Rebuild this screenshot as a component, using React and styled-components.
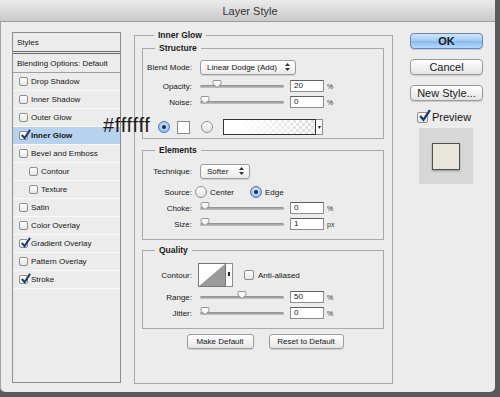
import React from "react";
import styled, { createGlobalStyle } from "styled-components";

const GlobalStyle = createGlobalStyle`
  html, body {
    margin: 0;
    padding: 0;
    background: #5a5a5a;
  }
  body {
    font-family: "Liberation Sans", Arial, sans-serif;
    color: #151515;
  }
`;

const styleItems = [
  { name: "Drop Shadow" },
  { name: "Inner Shadow" },
  { name: "Outer Glow" },
  { name: "Inner Glow", checked: true, active: true },
  { name: "Bevel and Emboss" },
  { name: "Contour", indent: true },
  { name: "Texture", indent: true },
  { name: "Satin" },
  { name: "Color Overlay" },
  { name: "Gradient Overlay", checked: true },
  { name: "Pattern Overlay" },
  { name: "Stroke", checked: true },
];

function Check({ checked, size }) {
  return (
    <CheckBox $size={size}>
      {checked && (
        <CheckMark viewBox="0 0 12 12" $size={size}>
          <path d="M2 6.5 L5 10 L11 1" fill="none" stroke="#1c3b73" strokeWidth="2.2" />
        </CheckMark>
      )}
    </CheckBox>
  );
}

function Slider({ value }) {
  return (
    <SliderWrap>
      <Track />
      <Thumb viewBox="0 0 10 8" $pos={value}>
        <path d="M1 1.5 Q1 0.5 2 0.5 H8 Q9 0.5 9 1.5 V4 L5 7.5 L1 4 Z" fill="#fbfbfb" stroke="#7d7d7d" strokeWidth="0.8" />
      </Thumb>
    </SliderWrap>
  );
}

function SliderRow({ label, value, pos, unit, mt }) {
  return (
    <Row $mt={mt}>
      <Label>{label}</Label>
      <Slider value={pos} />
      <Input>{value}</Input>
      <Unit>{unit}</Unit>
    </Row>
  );
}

function Arrows() {
  return (
    <svg width="5" height="8" viewBox="0 0 5 8">
      <path d="M2.5 0 L5 3 H0 Z M2.5 8 L5 5 H0 Z" fill="#333" />
    </svg>
  );
}

export default function App() {
  return (
    <>
      <GlobalStyle />
      <Window>
        <TitleBar>Layer Style</TitleBar>
        <Body>
          <StylesPanel>
            <PanelHead>Styles</PanelHead>
            <PanelSub>Blending Options: Default</PanelSub>
            {styleItems.map((item) => (
              <StyleRow key={item.name} $active={item.active} $indent={item.indent}>
                <Check checked={item.checked} size={9} />
                <span>{item.name}</span>
              </StyleRow>
            ))}
          </StylesPanel>

          <Outer>
            <Legend>Inner Glow</Legend>

            <Group $mt={3} $pb={3}>
              <Legend>Structure</Legend>
              <Row $mt={6}>
                <Label>Blend Mode:</Label>
                <Select $w={96}>
                  <span>Linear Dodge (Add)</span>
                  <Arrows />
                </Select>
              </Row>
              <SliderRow label="Opacity:" value="20" pos={20} unit="%" mt={3} />
              <SliderRow label="Noise:" value="0" pos={0} unit="%" />
              <Row $mt={9} $pl={15}>
                <Radio $on />
                <Swatch />
                <Radio $ml={11} />
                <GradientBar />
                <PickerArrow $h={16}>
                  <svg width="3" height="3" viewBox="0 0 3 3">
                    <path d="M0 0 H3 L1.5 3 Z" fill="#222" />
                  </svg>
                </PickerArrow>
              </Row>
            </Group>

            <Group $mt={6} $pb={7}>
              <Legend>Elements</Legend>
              <Row $mt={8}>
                <Label>Technique:</Label>
                <Select $w={50}>
                  <span>Softer</span>
                  <Arrows />
                </Select>
              </Row>
              <Row $mt={5}>
                <Label $gap={3}>Source:</Label>
                <Radio />
                <RadioText $mr={16}>Center</RadioText>
                <Radio $on />
                <RadioText>Edge</RadioText>
              </Row>
              <SliderRow label="Choke:" value="0" pos={0} unit="%" />
              <SliderRow label="Size:" value="1" pos={0} unit="px" />
            </Group>

            <Group $mt={5} $pb={7}>
              <Legend>Quality</Legend>
              <Row $mt={8} $h={24}>
                <Label $gap={6}>Contour:</Label>
                <ContourBox>
                  <svg width="26" height="22" viewBox="0 0 26 22">
                    <path d="M0 22 L26 0 V22 Z" fill="#9b9b9b" />
                  </svg>
                </ContourBox>
                <PickerArrow $h={24}>
                  <svg width="2" height="6" viewBox="0 0 2 6">
                    <rect x="0" y="0" width="2" height="4" fill="#222" />
                  </svg>
                </PickerArrow>
                <Spacer $w={11} />
                <Check size={10} />
                <RadioText $ml={4}>Anti-aliased</RadioText>
              </Row>
              <SliderRow label="Range:" value="50" pos={50} unit="%" mt={2} />
              <SliderRow label="Jitter:" value="0" pos={0} unit="%" />
            </Group>

            <ButtonRow>
              <SmallButton $w={67}>Make Default</SmallButton>
              <SmallButton $w={75}>Reset to Default</SmallButton>
            </ButtonRow>
          </Outer>

          <Side>
            <DialogButton $primary>OK</DialogButton>
            <DialogButton>Cancel</DialogButton>
            <DialogButton>New Style...</DialogButton>
            <PreviewRow>
              <Check checked size={11} />
              <span>Preview</span>
            </PreviewRow>
            <PreviewBox>
              <PreviewSwatch />
            </PreviewBox>
          </Side>
        </Body>

        <Annotation>#ffffff</Annotation>
      </Window>
    </>
  );
}

const Window = styled.div`
  position: relative;
  width: 495px;
  height: 392px;
  background: #ececec;
  border-radius: 0 0 5px 5px;
  box-shadow: inset 1px 0 0 #a3a3a3;
  overflow: hidden;
`;

const TitleBar = styled.div`
  height: 22px;
  box-sizing: border-box;
  border-bottom: 1px solid #9d9d9d;
  background: linear-gradient(#ececec, #c9c9c9);
  display: flex;
  align-items: center;
  justify-content: center;
  padding: 1px 0 0 5px;
  font-size: 11px;
  color: #333;
`;

const Body = styled.div`
  display: flex;
  align-items: flex-start;
  padding: 8px 0 0 12px;
`;

const StylesPanel = styled.div`
  width: 109px;
  height: 351px;
  margin-top: 2px;
  box-sizing: border-box;
  border: 1px solid #8c8c8c;
  background: #ececec;
  font-size: 8px;
  flex-shrink: 0;
`;

const PanelHead = styled.div`
  height: 18px;
  display: flex;
  align-items: center;
  padding-left: 4px;
  border-bottom: 3px double #6c6c6c;
`;

const PanelSub = styled.div`
  height: 18px;
  display: flex;
  align-items: center;
  padding-left: 4px;
  border-bottom: 1px solid #a0a0a0;
`;

const StyleRow = styled.div`
  height: 17px;
  display: flex;
  align-items: center;
  gap: 3px;
  padding-left: ${(p) => (p.$indent ? 16 : 6)}px;
  border-bottom: 1px solid #f9f9f9;
  background: ${(p) => (p.$active ? "#b7d2ef" : "transparent")};
  font-weight: ${(p) => (p.$active ? "bold" : "normal")};
`;

const CheckBox = styled.span`
  position: relative;
  display: inline-block;
  flex-shrink: 0;
  width: ${(p) => p.$size}px;
  height: ${(p) => p.$size}px;
  box-sizing: border-box;
  border: 1px solid #8e8e8e;
  border-radius: 2px;
  background: linear-gradient(#ffffff, #e6e6e6);
`;

const CheckMark = styled.svg`
  position: absolute;
  left: 0;
  top: ${(p) => -Math.round(p.$size * 0.35)}px;
  width: ${(p) => p.$size + 2}px;
  height: ${(p) => p.$size + 2}px;
`;

const Outer = styled.fieldset`
  margin: 0 0 0 13px;
  padding: 0 8px 34px 7px;
  width: 259px;
  box-sizing: border-box;
  border: 1px solid #a7a7a7;
  min-width: 0;
  flex-shrink: 0;
`;

const Legend = styled.legend`
  margin-left: 12px;
  padding: 0 4px;
  font-size: 8.5px;
  line-height: 10px;
  font-weight: bold;
  color: #1a1a1a;
`;

const Group = styled.fieldset`
  margin: ${(p) => p.$mt}px 0 0;
  padding: 0 0 ${(p) => p.$pb}px;
  border: 1px solid #a9a9a9;
  min-width: 0;
`;

const Row = styled.div`
  display: flex;
  align-items: center;
  height: ${(p) => p.$h || 16}px;
  margin-top: ${(p) => p.$mt || 0}px;
  padding-left: ${(p) => p.$pl || 0}px;
  font-size: 8px;
`;

const Label = styled.span`
  width: 49px;
  flex-shrink: 0;
  text-align: right;
  margin-right: ${(p) => (p.$gap === undefined ? 8 : p.$gap)}px;
  font-size: 8px;
`;

const Select = styled.div`
  width: ${(p) => p.$w}px;
  height: 15px;
  box-sizing: border-box;
  border: 1px solid #9b9b9b;
  border-radius: 3px;
  background: linear-gradient(#ffffff, #ececec);
  box-shadow: 0 1px 1px rgba(0, 0, 0, 0.12);
  display: flex;
  align-items: center;
  justify-content: space-between;
  padding: 0 5px 0 6px;
  font-size: 8px;
`;

const SliderWrap = styled.div`
  position: relative;
  width: 84px;
  height: 10px;
  display: flex;
  align-items: center;
  flex-shrink: 0;
`;

const Track = styled.div`
  width: 100%;
  height: 3px;
  border-radius: 2px;
  background: linear-gradient(#8a8a8a, #c6c6c6);
`;

const Thumb = styled.svg`
  position: absolute;
  top: -1px;
  left: calc(${(p) => p.$pos}% - ${(p) => (p.$pos === 0 ? 0 : 5)}px);
  width: 10px;
  height: 8px;
`;

const Input = styled.div`
  width: 34px;
  height: 12px;
  margin-left: 6px;
  box-sizing: border-box;
  border: 1px solid #8d8d8d;
  border-top-color: #5f5f5f;
  background: #fff;
  padding-left: 3px;
  font-size: 8px;
  line-height: 10px;
  flex-shrink: 0;
`;

const Unit = styled.span`
  margin-left: 3px;
  font-size: 7px;
  color: #333;
`;

const Radio = styled.span`
  position: relative;
  width: 12px;
  height: 12px;
  margin-left: ${(p) => p.$ml || 0}px;
  flex-shrink: 0;
  box-sizing: border-box;
  border-radius: 50%;
  border: 1px solid ${(p) => (p.$on ? "#4b74ab" : "#8f8f8f")};
  background: ${(p) =>
    p.$on
      ? "radial-gradient(circle at 50% 40%, #d6e8fb, #7fb0e8)"
      : "linear-gradient(#ffffff, #e3e3e3)"};

  &::after {
    content: "";
    display: ${(p) => (p.$on ? "block" : "none")};
    position: absolute;
    left: 3px;
    top: 3px;
    width: 4px;
    height: 4px;
    border-radius: 50%;
    background: #1b2b48;
  }
`;

const RadioText = styled.span`
  margin-left: ${(p) => (p.$ml === undefined ? 3 : p.$ml)}px;
  margin-right: ${(p) => p.$mr || 0}px;
  font-size: 8px;
`;

const Swatch = styled.span`
  width: 13px;
  height: 13px;
  margin-left: 7px;
  box-sizing: border-box;
  border: 1px solid #8a8a8a;
  background: #fff;
  flex-shrink: 0;
`;

const GradientBar = styled.span`
  width: 93px;
  height: 16px;
  margin-left: 10px;
  box-sizing: border-box;
  border: 1px solid #333;
  background: linear-gradient(to right, #fff 15%, rgba(255, 255, 255, 0) 100%),
    repeating-conic-gradient(#dadada 0 25%, #fff 0 50%) 0 0 / 6px 6px;
  flex-shrink: 0;
`;

const PickerArrow = styled.span`
  width: 7px;
  height: ${(p) => p.$h}px;
  box-sizing: border-box;
  border: 1px solid #8c8c8c;
  border-left: none;
  background: #fafafa;
  display: flex;
  align-items: center;
  justify-content: center;
  flex-shrink: 0;
`;

const ContourBox = styled.span`
  width: 28px;
  height: 24px;
  box-sizing: border-box;
  border: 1px solid #777;
  background: #fff;
  display: flex;
  flex-shrink: 0;
`;

const Spacer = styled.span`
  width: ${(p) => p.$w}px;
  flex-shrink: 0;
`;

const ButtonRow = styled.div`
  display: flex;
  justify-content: center;
  gap: 15px;
  margin-top: 5px;
  padding-left: 4px;
`;

const SmallButton = styled.div`
  width: ${(p) => p.$w}px;
  height: 15px;
  box-sizing: border-box;
  border: 1px solid #9c9c9c;
  border-radius: 3px;
  background: linear-gradient(#ffffff, #e6e6e6);
  box-shadow: 0 1px 1px rgba(0, 0, 0, 0.12);
  display: flex;
  align-items: center;
  justify-content: center;
  font-size: 8px;
`;

const Side = styled.div`
  width: 73px;
  margin-left: 17px;
  display: flex;
  flex-direction: column;
  flex-shrink: 0;
`;

const DialogButton = styled.div`
  height: 16px;
  margin-top: ${(p) => (p.$primary ? 3 : 10)}px;
  box-sizing: border-box;
  border: 1px solid ${(p) => (p.$primary ? "#6585b3" : "#9a9a9a")};
  border-radius: 4px;
  background: ${(p) =>
    p.$primary
      ? "linear-gradient(#d3e6fa 0%, #a2cbf4 48%, #86b9f0 52%, #b8dafa 100%)"
      : "linear-gradient(#ffffff, #e4e4e4)"};
  box-shadow: 0 1px 1px rgba(0, 0, 0, 0.15);
  display: flex;
  align-items: center;
  justify-content: center;
  font-size: 11px;
  font-weight: ${(p) => (p.$primary ? "bold" : "normal")};
  color: #1a1a1a;
`;

const PreviewRow = styled.div`
  height: 16px;
  margin-top: 8px;
  padding-left: 7px;
  display: flex;
  align-items: center;
  gap: 4px;
  font-size: 11px;
`;

const PreviewBox = styled.div`
  width: 54px;
  height: 56px;
  margin: 3px 0 0 9px;
  background: #d7d7d7;
  display: flex;
  align-items: center;
  justify-content: center;
`;

const PreviewSwatch = styled.div`
  width: 28px;
  height: 27px;
  box-sizing: border-box;
  border: 1px solid #4d4d4d;
  background: #e9e5dc;
  box-shadow: 0 1px 2px rgba(0, 0, 0, 0.3);
`;

const Annotation = styled.div`
  position: absolute;
  left: 103px;
  top: 115px;
  font-size: 20px;
  line-height: 20px;
  letter-spacing: 0.7px;
  color: #1a1a1a;
`;
